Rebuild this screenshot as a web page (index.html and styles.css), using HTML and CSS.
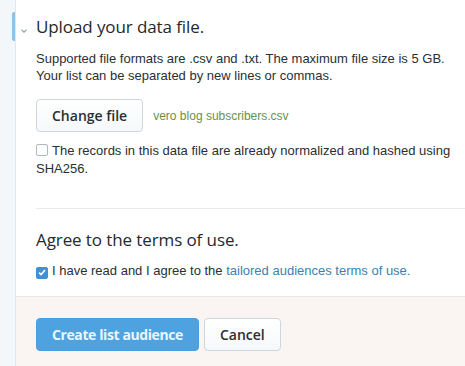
FILE: index.html
```html
<!DOCTYPE html>
<html>
<head>
<meta charset="utf-8">
<link rel="stylesheet" href="styles.css">
</head>
<body>
<div class="page">
  <div class="rail"><div class="rail-mark"></div></div>
  <div class="panel">
    <div class="section upload">
      <h2 class="title"><span class="caret"><svg width="6" height="4" viewBox="0 0 6 4"><path d="M0.5 0.6 L3 3.2 L5.5 0.6" fill="none" stroke="#8aa4b8" stroke-width="1.2"/></svg></span>Upload your data file.</h2>
      <p class="help">Supported file formats are .csv and .txt. The maximum file size is 5 GB.<br>Your list can be separated by new lines or commas.</p>
      <div class="file-row">
        <button class="btn">Change file</button>
        <span class="file-name">vero blog subscribers.csv</span>
      </div>
      <label class="check-row">
        <span class="box"></span>The records in this data file are already normalized and hashed using SHA256.
      </label>
    </div>
    <div class="section terms">
      <h2 class="title">Agree to the terms of use.</h2>
      <label class="check-row">
        <span class="box checked"><svg width="8" height="7" viewBox="0 0 8 7"><path d="M1 3.6 L3.1 5.6 L7 1" fill="none" stroke="#fff" stroke-width="1.6"/></svg></span>I have read and I agree to the&nbsp;<a class="link" href="#">tailored audiences terms of use.</a>
      </label>
    </div>
    <div class="footer">
      <button class="btn primary">Create list audience</button>
      <button class="btn">Cancel</button>
    </div>
  </div>
</div>
</body>
</html>
```
FILE: styles.css
```css
* { box-sizing: border-box; }
html, body { margin: 0; padding: 0; }
body {
  width: 465px;
  height: 366px;
  overflow: hidden;
  background: #f4f7f9;
  font-family: "Liberation Sans", Arial, sans-serif;
  color: #292f33;
}
.page {
  display: flex;
  height: 366px;
}
.rail {
  width: 15px;
  flex: none;
  padding-top: 12px;
  display: flex;
  justify-content: flex-end;
}
.rail-mark {
  width: 3px;
  height: 29px;
  background: #8fc3e6;
  border-radius: 2px 0 0 2px;
}
.panel {
  flex: 1;
  background: #fff;
  border-left: 1px solid #e1e8ed;
  display: flex;
  flex-direction: column;
}
.upload {
  margin-left: 20px;
  padding-top: 16px;
  padding-bottom: 30px;
  border-bottom: 1px solid #e6ecf0;
}
.title {
  margin: 0;
  font-family: "Open Sans", sans-serif;
  font-weight: 400;
  font-size: 17px;
  line-height: 22px;
  color: #24292d;
  position: relative;
  letter-spacing: -0.1px;
}
.caret {
  position: absolute;
  left: -15px;
  top: 11px;
  line-height: 0;
}
.help {
  margin: 12px 0 0;
  font-size: 13px;
  line-height: 17px;
}
.file-row {
  display: flex;
  align-items: center;
  margin-top: 15px;
}
.btn {
  height: 33px;
  padding: 0 15px;
  border: 1px solid #ccd6dd;
  border-radius: 4px;
  background: linear-gradient(#fff, #f5f8fa);
  font-family: "Open Sans", sans-serif;
  font-weight: 600;
  font-size: 14px;
  color: #292f33;
}
.file-name {
  margin-left: 10px;
  font-size: 12px;
  color: #66924a;
}
.check-row {
  display: block;
  margin-top: 10px;
  font-size: 13px;
  line-height: 18px;
}
.box {
  display: inline-flex;
  align-items: center;
  justify-content: center;
  width: 12px;
  height: 12px;
  border: 1px solid #aab8c2;
  border-radius: 2px;
  margin-right: 4px;
  vertical-align: -1px;
  background: #fff;
}
.box.checked {
  background: #3f90d6;
  border-color: #3f90d6;
}
.terms {
  padding: 20px 0 16px 20px;
}
.terms .check-row {
  margin-top: 11px;
}
.link {
  color: #3b7fb3;
  text-decoration: none;
}
.footer {
  flex: 1;
  background: #faf5f3;
  border-top: 1px solid #ece6e4;
  padding: 21px 0 0 20px;
  display: flex;
  align-items: flex-start;
  gap: 5px;
}
.btn.primary {
  background: #4da2df;
  border-color: #4a9edb;
  color: #eaf5fc;
  font-weight: 700;
  letter-spacing: -0.4px;
}
```
